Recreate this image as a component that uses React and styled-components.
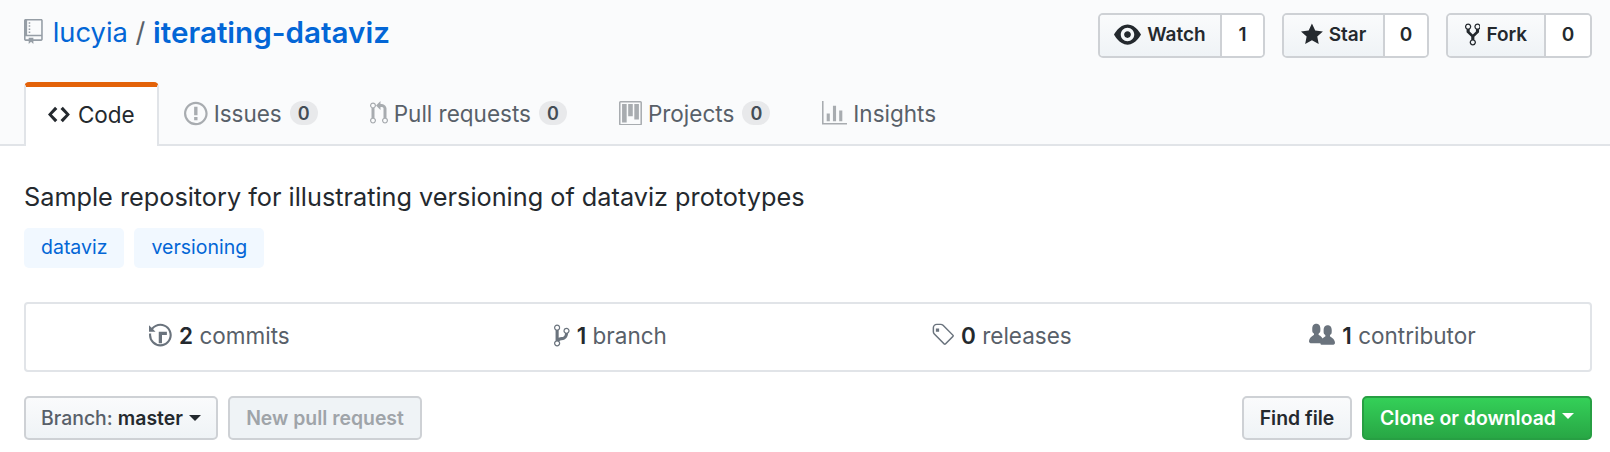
import React from "react";
import styled, { createGlobalStyle } from "styled-components";

const Global = createGlobalStyle`
  html, body { margin: 0; padding: 0; background: #fff; }
  body { font-family: Inter, "Noto Sans", "Liberation Sans", sans-serif; color: #24292e; -webkit-font-smoothing: antialiased; }
  * { box-sizing: border-box; }
`;

const P = {
  repo: [12, "M4 9H3V8h1v1zm0-3H3v1h1V6zm0-2H3v1h1V4zm0-2H3v1h1V2zm8-1v12c0 .55-.45 1-1 1H6v2l-1.5-1.5L3 16v-2H1c-.55 0-1-.45-1-1V1c0-.55.45-1 1-1h10c.55 0 1 .45 1 1zm-1 10H1v2h2v-1h3v1h5v-2zm0-10H2v9h9V1z"],
  eye: [16, "M8.06 2C3 2 0 8 0 8s3 6 8.06 6C13 14 16 8 16 8s-3-6-7.94-6zM8 12c-2.2 0-4-1.78-4-4 0-2.2 1.8-4 4-4 2.22 0 4 1.8 4 4 0 2.22-1.78 4-4 4zm2-4c0 1.11-.89 2-2 2-1.11 0-2-.89-2-2 0-1.11.89-2 2-2 1.11 0 2 .89 2 2z"],
  star: [14, "M14 6l-4.9-.64L7 1 4.9 5.36 0 6l3.6 3.26L2.67 14 7 11.67 11.33 14l-.93-4.74L14 6z"],
  fork: [10, "M8 1a1.993 1.993 0 0 0-1 3.72V6L5 8 3 6V4.72A1.993 1.993 0 0 0 2 1a1.993 1.993 0 0 0-1 3.72V6.5l3 3v1.78A1.993 1.993 0 0 0 5 15a1.993 1.993 0 0 0 1-3.72V9.5l3-3V4.72A1.993 1.993 0 0 0 8 1zM2 4.2C1.34 4.2.8 3.65.8 3c0-.65.55-1.2 1.2-1.2.65 0 1.2.55 1.2 1.2 0 .65-.55 1.2-1.2 1.2zm3 10c-.66 0-1.2-.55-1.2-1.2 0-.65.55-1.2 1.2-1.2.65 0 1.2.55 1.2 1.2 0 .65-.55 1.2-1.2 1.2zm3-10c-.66 0-1.2-.55-1.2-1.2 0-.65.55-1.2 1.2-1.2.65 0 1.2.55 1.2 1.2 0 .65-.55 1.2-1.2 1.2z"],
  code: [14, "M9.5 3L8 4.5 11.5 8 8 11.5 9.5 13 14 8 9.5 3zm-5 0L0 8l4.5 5L6 11.5 2.5 8 6 4.5 4.5 3z"],
  issue: [14, "M7 2.3c3.14 0 5.7 2.56 5.7 5.7s-2.56 5.7-5.7 5.7A5.71 5.71 0 0 1 1.3 8c0-3.14 2.56-5.7 5.7-5.7zM7 1C3.14 1 0 4.14 0 8s3.14 7 7 7 7-3.14 7-7-3.14-7-7-7zm1 3H6v5h2V4zm0 6H6v2h2v-2z"],
  pr: [12, "M11 11.28V5c-.03-.78-.34-1.47-.94-2.06C9.46 2.35 8.78 2.03 8 2H7V0L4 3l3 3V4h1c.27.02.48.11.69.31.21.2.3.42.31.69v6.28A1.993 1.993 0 0 0 10 15a1.993 1.993 0 0 0 1-3.72zm-1 2.92c-.66 0-1.2-.55-1.2-1.2 0-.65.55-1.2 1.2-1.2.65 0 1.2.55 1.2 1.2 0 .65-.55 1.2-1.2 1.2zM4 3c0-1.11-.89-2-2-2a1.993 1.993 0 0 0-1 3.72v6.56A1.993 1.993 0 0 0 2 15a1.993 1.993 0 0 0 1-3.72V4.72c.59-.34 1-.98 1-1.72zm-.8 10c0 .66-.55 1.2-1.2 1.2-.65 0-1.2-.55-1.2-1.2 0-.65.55-1.2 1.2-1.2.65 0 1.2.55 1.2 1.2zM2 4.2C1.34 4.2.8 3.65.8 3c0-.65.55-1.2 1.2-1.2.65 0 1.2.55 1.2 1.2 0 .65-.55 1.2-1.2 1.2z"],
  project: [15, "M10 12h3V2h-3v10zm-4-2h3V2H6v8zm-4 4h3V2H2v12zm-1 1h13V1H1v14zM14 0H1a1 1 0 0 0-1 1v14a1 1 0 0 0 1 1h13a1 1 0 0 0 1-1V1a1 1 0 0 0-1-1z"],
  graph: [16, "M16 14v1H0V0h1v14h15zM5 13H3V8h2v5zm4 0H7V3h2v10zm4 0h-2V6h2v7z"],
  history: [14, "M8 13H6V6h5v2H8v5zM7 1C4.81 1 2.87 2.02 1.59 3.59L0 2v4h4L2.5 4.5C3.55 3.17 5.17 2.3 7 2.3c3.14 0 5.7 2.56 5.7 5.7s-2.56 5.7-5.7 5.7A5.71 5.71 0 0 1 1.3 8c0-.34.03-.67.09-1H.08C.03 7.33 0 7.66 0 8c0 3.86 3.14 7 7 7s7-3.14 7-7-3.14-7-7-7z"],
  branch: [10, "M10 5c0-1.11-.89-2-2-2a1.993 1.993 0 0 0-1 3.72v.3c-.02.52-.23.98-.63 1.38-.4.4-.86.61-1.38.63-.83.02-1.48.16-2 .45V4.72a1.993 1.993 0 0 0-1-3.72C.88 1 0 1.89 0 3a2 2 0 0 0 1 1.72v6.56c-.59.35-1 .99-1 1.72 0 1.11.89 2 2 2 1.11 0 2-.89 2-2 0-.53-.2-1-.53-1.36.09-.06.48-.41.59-.47.25-.11.56-.17.94-.17 1.05-.05 1.95-.45 2.75-1.25S8.95 7.77 9 6.73h-.02C9.59 6.37 10 5.73 10 5zM2 1.8c.66 0 1.2.55 1.2 1.2 0 .65-.55 1.2-1.2 1.2C1.35 4.2.8 3.65.8 3c0-.65.55-1.2 1.2-1.2zm0 12.41c-.66 0-1.2-.55-1.2-1.2 0-.65.55-1.2 1.2-1.2.65 0 1.2.55 1.2 1.2 0 .65-.55 1.2-1.2 1.2zm6-8c-.66 0-1.2-.55-1.2-1.2 0-.65.55-1.2 1.2-1.2.65 0 1.2.55 1.2 1.2 0 .65-.55 1.2-1.2 1.2z"],
  tag: [14, "M7.73 1.73C7.26 1.26 6.62 1 5.96 1H3.5C2.13 1 1 2.13 1 3.5v2.47c0 .66.27 1.3.73 1.77l6.06 6.06c.39.39 1.02.39 1.41 0l4.59-4.59a.996.996 0 0 0 0-1.41L7.73 1.73zM2.38 7.09c-.31-.3-.47-.7-.47-1.13V3.5c0-.88.72-1.59 1.59-1.59h2.47c.42 0 .83.16 1.13.47l6.14 6.13-4.73 4.73-6.13-6.15zM3 4h2v2H3V4z"],
  org: [16, "M16 12.999c0 .439-.45 1-1 1H7.995c-.539 0-.994-.447-.995-.999H1c-.54 0-1-.561-1-1 0-2.634 3-4 3-4s.229-.409 0-1c-.841-.621-1.058-.59-1-3 .058-2.419 1.367-3 2.5-3s2.442.58 2.5 3c.058 2.41-.159 2.379-1 3-.229.59 0 1 0 1s1.549.711 2.42 2.088C9.196 9.369 10 8.999 10 8.999s.229-.409 0-1c-.841-.62-1.058-.59-1-3 .058-2.419 1.367-3 2.5-3s2.437.581 2.495 3c.059 2.41-.158 2.38-1 3-.229.59 0 1 0 1s3.005 1.366 3.005 4z"],
};

const Svg = styled.svg`
  display: block;
  flex: none;
  fill: ${(p) => p.$color || "currentColor"};
`;

const Icon = ({ name, h = 22, color }) => {
  const [w, d] = P[name];
  return (
    <Svg viewBox={`0 0 ${w} 16`} width={(w * h) / 16} height={h} $color={color}>
      <path fillRule="evenodd" d={d} />
    </Svg>
  );
};

const Page = styled.div`
  width: 1610px;
  height: 452px;
  overflow: hidden;
  background: #fff;
`;

const Header = styled.header`
  flex: none;
  height: 146px;
  background: #fafbfc;
  border-bottom: 2px solid #e1e4e8;
  padding: 0 18px 0 24px;
`;

const TopRow = styled.div`
  height: 82px;
  display: flex;
  justify-content: space-between;
  padding-top: 13px;
`;

const Title = styled.h1`
  margin: 0;
  height: 40px;
  margin-top: -1px;
  display: flex;
  align-items: center;
  font-size: 27.3px;
  font-weight: 400;
  color: #586069;
  white-space: pre;
`;

const TitleIcon = styled.span`
  margin-right: 10px;
  margin-top: -1px;
`;

const Owner = styled.span`
  color: #0366d6;
`;

const RepoName = styled.span`
  color: #0366d6;
  font-weight: 600;
  font-size: 29.6px;
`;

const Counters = styled.div`
  display: flex;
  gap: 17px;
`;

const Counter = styled.div`
  display: flex;
  height: 45px;
  border: 2px solid #ced1d5;
  border-radius: 5px;
  overflow: hidden;
  font-size: 19px;
  font-weight: 600;
`;

const CounterLabel = styled.div`
  display: flex;
  align-items: center;
  justify-content: center;
  gap: 6px;
  padding-bottom: 3px;
  width: ${(p) => p.$w}px;
  color: #24292e;
  background: linear-gradient(180deg, #fafbfc, #eff3f6);
  border-right: 2px solid #ced1d5;
`;

const CounterNum = styled.div`
  display: flex;
  align-items: center;
  justify-content: center;
  padding-bottom: 3px;
  width: ${(p) => p.$w}px;
  background: #fff;
  color: #24292e;
`;

const Tabs = styled.nav`
  display: flex;
  height: 64px;
`;

const Tab = styled.div`
  display: flex;
  align-items: center;
  gap: 6px;
  font-size: 22.5px;
  color: #586069;
  padding: 2px 27px 2px 25px;
  height: 62px;
`;

const ActiveTab = styled(Tab)`
  width: 135px;
  height: 64px;
  color: #24292e;
  background: #fff;
  border: 2px solid #e1e4e8;
  border-top: 5px solid #e36209;
  border-bottom: none;
  border-radius: 5px 5px 0 0;
  padding: 0 0 5px 22px;
  gap: 8px;
`;

const Badge = styled.span`
  display: inline-flex;
  align-items: center;
  justify-content: center;
  width: 28px;
  height: 24px;
  border-radius: 12px;
  margin-left: 2px;
  background: rgba(27, 31, 35, 0.08);
  color: #444d56;
  font-size: 18px;
  font-weight: 600;
`;

const Main = styled.main`
  padding: 0 18px 0 24px;
`;

const Description = styled.p`
  margin: 0;
  padding-top: 35px;
  height: 82px;
  font-size: 25.27px;
  line-height: 32px;
  color: #24292e;
`;

const Topics = styled.div`
  display: flex;
  gap: 10px;
`;

const Topic = styled.span`
  height: 40px;
  padding: 0 17px 2px;
  display: flex;
  align-items: center;
  background: #f1f8ff;
  border-radius: 5px;
  color: #0366d6;
  font-size: 19.5px;
`;

const Stats = styled.div`
  margin-top: 34px;
  width: 1568px;
  height: 70px;
  display: grid;
  grid-template-columns: repeat(4, 1fr);
  border: 2px solid #e1e4e8;
  border-radius: 4px;
`;

const Stat = styled.div`
  display: flex;
  align-items: center;
  justify-content: center;
  gap: 7px;
  font-size: 22.5px;
  color: #586069;
  white-space: pre;
  padding: 0 4px 4px 0;
`;

const Num = styled.strong`
  color: #24292e;
  font-weight: 600;
`;

const FileBar = styled.div`
  margin-top: 24px;
  width: 1568px;
  display: flex;
  justify-content: space-between;
`;

const Group = styled.div`
  display: flex;
  gap: 10px;
`;

const Button = styled.div`
  display: flex;
  align-items: center;
  justify-content: center;
  gap: 6px;
  height: 44px;
  width: ${(p) => p.$w}px;
  font-size: 19.4px;
  font-weight: 600;
  border-radius: 5px;
  border: 2px solid #ced1d5;
  color: #24292e;
  background: linear-gradient(180deg, #fafbfc, #eff3f6);
  white-space: pre;
`;

const MutedLabel = styled.span`
  color: #586069;
  font-weight: 500;
`;

const DisabledButton = styled(Button)`
  background: #eff3f6;
  color: #9fa4a9;
`;

const GreenButton = styled(Button)`
  border-color: #279f43;
  background: linear-gradient(180deg, #34d058, #28a745);
  color: #fff;
`;

const Caret = styled.span`
  width: 0;
  height: 0;
  border-style: solid;
  border-width: 6px 6px 0;
  border-color: ${(p) => p.$color || "#24292e"} transparent transparent;
  margin-top: ${(p) => p.$mt || 0}px;
`;

export default function App() {
  return (
    <Page>
      <Global />
      <Header>
        <TopRow>
          <Title>
            <TitleIcon><Icon name="repo" h={25} color="#959da5" /></TitleIcon>
            <Owner>lucyia</Owner>{" / "}<RepoName>iterating-dataviz</RepoName>
          </Title>
          <Counters>
            <Counter>
              <CounterLabel $w={122}><Icon name="eye" h={27} />Watch</CounterLabel>
              <CounterNum $w={41}>1</CounterNum>
            </Counter>
            <Counter>
              <CounterLabel $w={101}><Icon name="star" h={25} />Star</CounterLabel>
              <CounterNum $w={42}>0</CounterNum>
            </Counter>
            <Counter>
              <CounterLabel $w={98}><Icon name="fork" h={25} />Fork</CounterLabel>
              <CounterNum $w={44}>0</CounterNum>
            </Counter>
          </Counters>
        </TopRow>
        <Tabs>
          <ActiveTab><Icon name="code" h={25} />Code</ActiveTab>
          <Tab><Icon name="issue" h={27} color="#a8acb0" />Issues<Badge>0</Badge></Tab>
          <Tab><Icon name="pr" h={24} color="#a8acb0" />Pull requests<Badge>0</Badge></Tab>
          <Tab><Icon name="project" h={24.5} color="#a8acb0" />Projects<Badge>0</Badge></Tab>
          <Tab><Icon name="graph" h={25} color="#a8acb0" />Insights</Tab>
        </Tabs>
      </Header>
      <Main>
        <Description>Sample repository for illustrating versioning of dataviz prototypes</Description>
        <Topics>
          <Topic>dataviz</Topic>
          <Topic>versioning</Topic>
        </Topics>
        <Stats>
          <Stat><Icon name="history" h={26} color="#6a737d" /><span><Num>2</Num> commits</span></Stat>
          <Stat><Icon name="branch" h={25} color="#6a737d" /><span><Num>1</Num> branch</span></Stat>
          <Stat><Icon name="tag" h={26} color="#6a737d" /><span><Num>0</Num> releases</span></Stat>
          <Stat><Icon name="org" h={26} color="#6a737d" /><span><Num>1</Num> contributor</span></Stat>
        </Stats>
        <FileBar>
          <Group>
            <Button $w={194}><span><MutedLabel>Branch: </MutedLabel>master</span><Caret /></Button>
            <DisabledButton $w={194}>New pull request</DisabledButton>
          </Group>
          <Group>
            <Button $w={110}>Find file</Button>
            <GreenButton $w={230}>Clone or download<Caret $color="#fff" $mt={-4} /></GreenButton>
          </Group>
        </FileBar>
      </Main>
    </Page>
  );
}
